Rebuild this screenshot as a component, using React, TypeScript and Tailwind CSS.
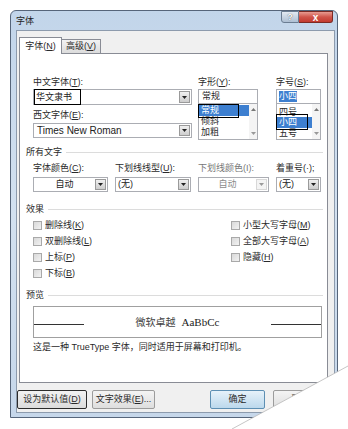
import React from 'react';

const FONT = "font-['Liberation_Sans','Noto_Sans_CJK_SC',sans-serif]";

const Arrow = ({ light }: { light?: boolean }) => (
  <div
    className={`w-[11px] my-[1px] mr-[1px] flex items-center justify-center border ${
      light ? 'border-[#d8d8d8] bg-[#f4f4f4]' : 'border-[#9a9a9a] bg-gradient-to-b from-[#f0f0f0] to-[#cdcdcd]'
    }`}
  >
    <svg width="5" height="3" viewBox="0 0 5 3">
      <path d="M0 0h5L2.5 3z" fill={light ? '#9a9a9a' : '#222'} />
    </svg>
  </div>
);

const Combo = ({
  w,
  h,
  children,
  center,
  light,
}: {
  w: string;
  h: string;
  children: React.ReactNode;
  center?: boolean;
  light?: boolean;
}) => (
  <div className={`${w} ${h} flex bg-white border border-[#abadb3]`}>
    <div
      className={`flex-1 flex items-center px-[2px] ${center ? 'justify-center' : ''} ${
        light ? 'text-[#8a8a8a]' : 'text-[#222]'
      }`}
    >
      {children}
    </div>
    <Arrow light={light} />
  </div>
);

const ScrollBar = () => (
  <div className="w-[8px] h-full flex flex-col items-center justify-between py-[4px] bg-[#f4f4f4]">
    <svg width="5" height="3" viewBox="0 0 5 3">
      <path d="M0 3h5L2.5 0z" fill="#777" />
    </svg>
    <svg width="5" height="3" viewBox="0 0 5 3">
      <path d="M0 0h5L2.5 3z" fill="#999" />
    </svg>
  </div>
);

const Check = ({ children }: { children: React.ReactNode }) => (
  <div className="h-[12px] flex items-center gap-[3px]">
    <div className="w-[9px] h-[9px] border border-[#a9a9a9] bg-gradient-to-br from-[#d9d9d9] to-[#f2f2f2]" />
    <span>{children}</span>
  </div>
);

const GroupHead = ({ title }: { title: string }) => (
  <div className="h-[11px] -ml-[7px] flex items-center gap-[4px]">
    <span>{title}</span>
    <div className="flex-1 h-px bg-[#dcdcdc] mr-[-1px]" />
  </div>
);

const Button = ({
  w,
  children,
  focus,
  primary,
}: {
  w: string;
  children: React.ReactNode;
  focus?: boolean;
  primary?: boolean;
}) => (
  <div
    className={`${w} h-[19px] flex items-center justify-center rounded-[2px] border ${
      focus
        ? 'border-[#2b2b2b] bg-gradient-to-b from-[#f2f2f2] to-[#dcdcdc]'
        : primary
        ? 'border-[#5d8fb3] bg-gradient-to-b from-[#e6f2fa] to-[#bcd8ec]'
        : 'border-[#9c9c9c] bg-gradient-to-b from-[#f4f4f4] to-[#dedede]'
    }`}
  >
    {children}
  </div>
);

export default function App() {
  return (
    <div className={`relative w-[348px] h-[429px] overflow-hidden bg-white pt-[10px] pl-[10px] text-[9px] leading-[11px] text-[#2a2a2a] ${FONT}`}>
      {/* window */}
      <div className="w-[328px] h-[408px] flex flex-col rounded-t-[6px] border border-[#56657a] bg-gradient-to-b from-[#c2d5ea] via-[#d3e1f0] to-[#c6d7ea] pl-[5px] pr-[2px] pb-[4px]">
        {/* title bar */}
        <div className="h-[19px] flex items-start">
          <span className="mt-[5px] text-[9px] text-[#1e1e1e]">字体</span>
          <div className="ml-auto mr-[2px] flex">
            <div className="w-[18px] h-[12px] rounded-bl-[3px] border border-[#6b7d92] bg-gradient-to-b from-[#e3eaf2] to-[#aebfd3] flex items-center justify-center text-[9px] font-bold text-white [text-shadow:0_0_1px_#333]">
              ?
            </div>
            <div className="w-[34px] h-[12px] rounded-br-[3px] border border-l-0 border-[#7b2a24] bg-gradient-to-b from-[#e79b92] via-[#d0544a] to-[#c23a2f] flex items-center justify-center text-[10px] font-bold text-white">
              x
            </div>
          </div>
        </div>

        {/* client area */}
        <div className="flex-1 bg-[#f0f0f0] border border-[#8d9bad] flex flex-col">
          <div className="pl-[2px] pr-[6px] pt-[5px]">
            {/* tabs */}
            <div className="flex items-end h-[17px]">
              <div className="w-[43px] h-[17px] bg-white border border-b-0 border-[#898c95] flex items-center justify-center relative z-10 -mb-px">
                字体(<u>N</u>)
              </div>
              <div className="w-[39px] h-[14px] border border-l-0 border-b-0 border-[#898c95] bg-gradient-to-b from-[#f2f2f2] to-[#dcdcdc] flex items-center justify-center">
                高级(<u>V</u>)
              </div>
            </div>

            {/* panel */}
            <div className="h-[330px] bg-white border border-[#898c95] pl-[13px] pr-[5px] flex flex-col">
              {/* font row */}
              <div className="mt-[22px] flex">
                <div className="w-[159px] flex flex-col">
                  <div className="h-[12px] leading-[12px]">中文字体(<u>T</u>):</div>
                  <div className="relative mt-[1px]">
                    <Combo w="w-[159px]" h="h-[16px]">
                      <span className="text-[9px]">华文隶书</span>
                    </Combo>
                    <div className="absolute left-[1px] top-0 w-[47px] h-[16px] border-[1.5px] border-black" />
                  </div>
                  <div className="mt-[4px] h-[12px] leading-[12px]">西文字体(<u>E</u>):</div>
                  <div className="mt-[2px]">
                    <Combo w="w-[159px]" h="h-[15px]">
                      <span className="text-[10px] pl-[1px]">Times New Roman</span>
                    </Combo>
                  </div>
                </div>

                <div className="ml-[6px] w-[60px] flex flex-col">
                  <div className="h-[12px] leading-[12px]">字形(<u>Y</u>):</div>
                  <div className="mt-[1px] h-[15px] border border-[#abadb3] flex items-center px-[3px]">常规</div>
                  <div className="relative -mt-px h-[37px] border border-[#abadb3] flex">
                    <div className="flex-1 flex flex-col pt-[1px]">
                      <div className="h-[11px] bg-[#3d7fd0] text-white px-[2px] flex items-center">常规</div>
                      <div className="h-[11px] px-[2px] flex items-center">倾斜</div>
                      <div className="h-[11px] px-[2px] flex items-center">加粗</div>
                    </div>
                    <ScrollBar />
                    <div className="absolute -left-px top-0 w-[41px] h-[14px] border-[1.5px] border-black" />
                  </div>
                </div>

                <div className="ml-[18px] w-[45px] flex flex-col">
                  <div className="h-[12px] leading-[12px]">字号(<u>S</u>):</div>
                  <div className="mt-[1px] h-[15px] border border-[#abadb3] flex items-center px-[2px]">
                    <span className="bg-[#3d7fd0] text-white">小四</span>
                  </div>
                  <div className="relative -mt-px h-[37px] border border-[#abadb3] flex">
                    <div className="flex-1 flex flex-col pt-[3px]">
                      <div className="h-[10px] px-[2px] flex items-center">四号</div>
                      <div className="h-[11px] bg-[#3d7fd0] text-white px-[2px] flex items-center">小四</div>
                      <div className="h-[11px] px-[2px] flex items-center">五号</div>
                    </div>
                    <ScrollBar />
                    <div className="absolute -left-px top-[10px] w-[32px] h-[16px] border-[1.5px] border-black" />
                  </div>
                </div>
              </div>

              {/* all text */}
              <div className="mt-[7px]">
                <GroupHead title="所有文字" />
              </div>
              <div className="mt-[5px] flex gap-[7px] h-[11px]">
                <div className="w-[75px]">字体颜色(<u>C</u>):</div>
                <div className="w-[76px]">下划线线型(<u>U</u>):</div>
                <div className="w-[71px] text-[#777]">下划线颜色(I):</div>
                <div className="w-[45px] whitespace-nowrap">着重号(·);</div>
              </div>
              <div className="mt-[3px] flex gap-[7px]">
                <Combo w="w-[75px]" h="h-[15px]" center>自动</Combo>
                <Combo w="w-[76px]" h="h-[15px]">(无)</Combo>
                <Combo w="w-[71px]" h="h-[15px]" center light>自动</Combo>
                <Combo w="w-[45px]" h="h-[15px]">(无)</Combo>
              </div>

              {/* effects */}
              <div className="mt-[12px]">
                <GroupHead title="效果" />
              </div>
              <div className="mt-[4px] flex">
                <div className="w-[198px] flex flex-col gap-[4px]">
                  <Check>删除线(<u>K</u>)</Check>
                  <Check>双删除线(<u>L</u>)</Check>
                  <Check>上标(<u>P</u>)</Check>
                  <Check>下标(<u>B</u>)</Check>
                </div>
                <div className="flex flex-col gap-[4px]">
                  <Check>小型大写字母(<u>M</u>)</Check>
                  <Check>全部大写字母(<u>A</u>)</Check>
                  <Check>隐藏(<u>H</u>)</Check>
                </div>
              </div>

              {/* preview */}
              <div className="mt-[11px]">
                <GroupHead title="预览" />
              </div>
              <div className="mt-[5px] h-[32px] border border-[#a0a0a0] flex items-center">
                <div className="w-[50px] h-px bg-[#333] mt-[4px]" />
                <div className="flex-1 flex items-center justify-center gap-[6px]">
                  <span className="text-[10px] text-[#444]">微软卓越</span>
                  <span className="text-[11px] font-['Liberation_Serif',serif] text-[#222]">AaBbCc</span>
                </div>
                <div className="w-[50px] h-px bg-[#333] mt-[4px]" />
              </div>
              <div className="mt-[4px] h-[11px]">这是一种 TrueType 字体，同时适用于屏幕和打印机。</div>
            </div>
          </div>

          {/* buttons */}
          <div className="mt-[7px] pl-[0px] flex">
            <Button w="w-[70px]" focus>设为默认值(<u>D</u>)</Button>
            <div className="ml-[5px]">
              <Button w="w-[63px]">文字效果(<u>E</u>)...</Button>
            </div>
            <div className="ml-[55px]">
              <Button w="w-[55px]" primary>确定</Button>
            </div>
            <div className="ml-[8px]">
              <Button w="w-[55px]">取消</Button>
            </div>
          </div>
        </div>
      </div>

      {/* page curl */}
      <svg className="absolute left-0 top-0" width="348" height="429" viewBox="0 0 348 429">
        <defs>
          <linearGradient id="curl" x1="0" y1="0" x2="1" y2="1">
            <stop offset="0" stopColor="#e9e9e9" />
            <stop offset="0.5" stopColor="#ffffff" />
          </linearGradient>
        </defs>
        <polygon points="348,366 348,429 232,429" fill="url(#curl)" />
        <line x1="348" y1="366" x2="232" y2="429" stroke="#b8b8b8" strokeWidth="0.8" />
      </svg>
    </div>
  );
}
